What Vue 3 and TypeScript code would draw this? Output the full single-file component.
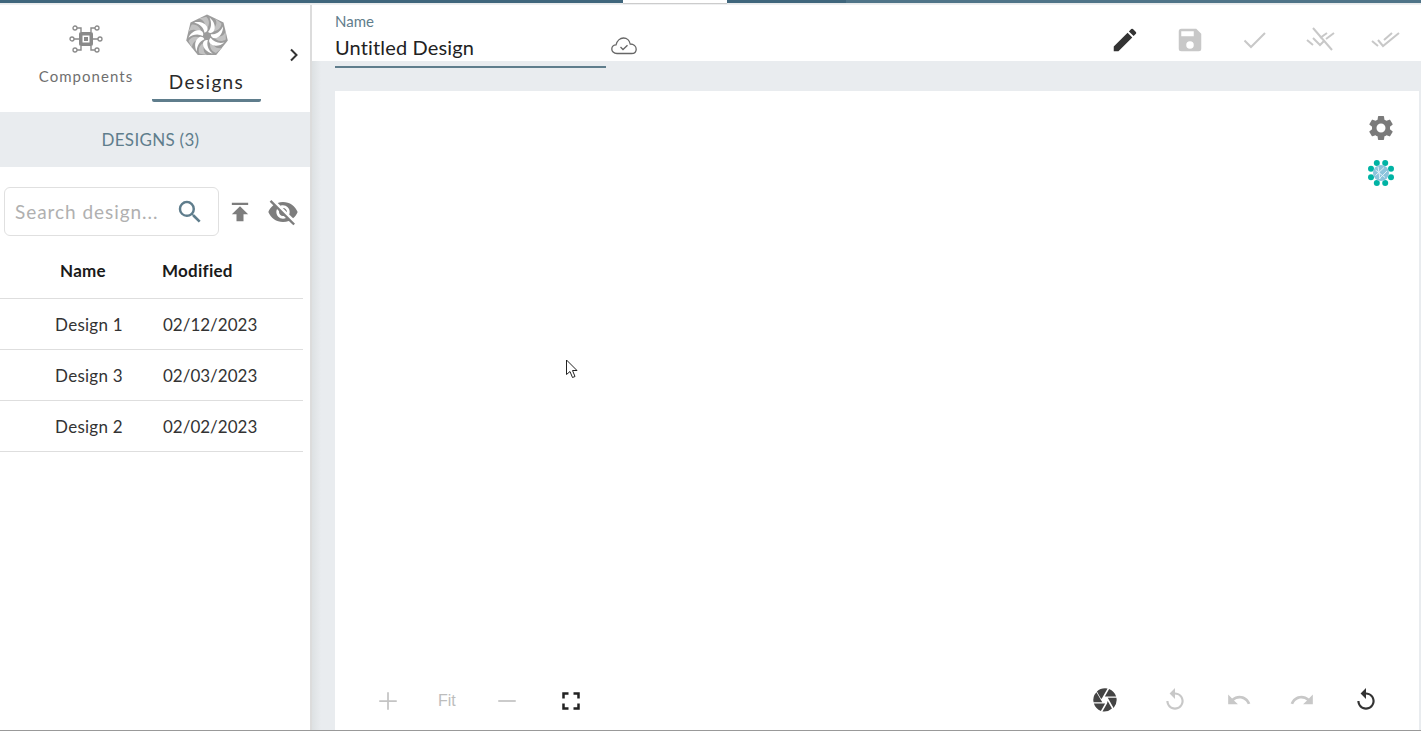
<script setup lang="ts">
const designs = [
  { name: 'Design 1', modified: '02/12/2023' },
  { name: 'Design 3', modified: '02/03/2023' },
  { name: 'Design 2', modified: '02/02/2023' },
]

// swirl blades of the designs logo
const blades = [0, 51.4, 102.9, 154.3, 205.7, 257.1, 308.6]
</script>

<template>
  <div class="page">
    <div class="top-stripe">
      <span class="stripe stripe--a"></span>
      <span class="stripe stripe--gap"></span>
      <span class="stripe stripe--b"></span>
      <span class="stripe stripe--c"></span>
    </div>

    <div class="body">
      <aside class="sidebar">
        <nav class="tabs">
          <div class="tab tab--components">
            <svg class="tab__chip" width="36" height="30" viewBox="0 0 36 30" fill="none" stroke="#8a8a8a">
              <rect x="11" y="8" width="14" height="14" rx="2" fill="#8a8a8a" stroke="none" />
              <rect x="14.5" y="11.5" width="7" height="7" fill="#fff" stroke="none" />
              <rect x="16" y="13" width="4" height="4" fill="#8a8a8a" stroke="none" />
              <path d="M13 8 V4 H9 M23 8 V4 H27 M13 22 V26 H9 M23 22 V26 H27 M11 15 H6 M25 15 H30" stroke-width="1.4" />
              <circle cx="7" cy="4" r="2" stroke-width="1.3" />
              <circle cx="29" cy="4" r="2" stroke-width="1.3" />
              <circle cx="7" cy="26" r="2" stroke-width="1.3" />
              <circle cx="29" cy="26" r="2" stroke-width="1.3" />
              <circle cx="4" cy="15" r="2" stroke-width="1.3" />
              <circle cx="32" cy="15" r="2" stroke-width="1.3" />
            </svg>
            <span class="tab__label">Components</span>
          </div>
          <div class="tab tab--active">
            <svg class="tab__logo" width="42" height="44" viewBox="-21 -22 42 44">
              <polygon points="0,-21.5 16.5,-13.5 20.8,4.5 9.2,19 -9.2,19 -20.8,4.5 -16.5,-13.5" fill="#9c9c9c" />
              <path
                v-for="a in blades"
                :key="`s${a}`"
                :transform="`rotate(${a})`"
                d="M3 -5 C9 -8 11 -13 8 -17.5 L14.5 -12.5 C14 -7 9 -3.5 3 -5 Z"
                fill="#c2c2c2"
              />
              <path
                v-for="a in blades"
                :key="a"
                :transform="`rotate(${a})`"
                d="M1 -4 C4.5 -8 5 -13 2.5 -18.5 C7 -15 9.5 -9 6.5 -4.5 C5 -2.8 3 -2.6 1 -4 Z"
                fill="#fff"
              />
            </svg>
            <span class="tab__label">Designs</span>
          </div>
          <svg class="tabs__next" width="10" height="14" viewBox="0 0 10 14" fill="none" stroke="#333" stroke-width="2">
            <path d="M2 1.5 L7.5 7 L2 12.5" />
          </svg>
        </nav>

        <div class="section-title">DESIGNS (3)</div>

        <div class="tools">
          <label class="search">
            <span class="search__text">Search design...</span>
            <svg width="30" height="30" viewBox="0 0 24 24" fill="#5f7d8c">
              <path d="M15.5 14h-.79l-.28-.27A6.47 6.47 0 0 0 16 9.5 6.5 6.5 0 1 0 9.5 16c1.61 0 3.09-.59 4.23-1.57l.27.28v.79l5 4.99L20.49 19l-4.99-5zm-6 0C7.01 14 5 11.99 5 9.5S7.01 5 9.5 5 14 7.01 14 9.5 11.99 14 9.5 14z" />
            </svg>
          </label>
          <svg class="tools__icon" width="28" height="28" viewBox="0 0 24 24" fill="#7d7d7d">
            <path d="M5 4v2h14V4H5zm0 10h4v6h6v-6h4l-7-7-7 7z" />
          </svg>
          <svg class="tools__icon tools__icon--eye" width="32" height="32" viewBox="0 0 24 24" fill="#7d7d7d">
            <path d="M12 7c2.76 0 5 2.24 5 5 0 .65-.13 1.26-.36 1.83l2.92 2.92c1.51-1.26 2.7-2.89 3.43-4.75-1.73-4.39-6-7.5-11-7.5-1.4 0-2.74.25-3.98.7l2.16 2.16C10.74 7.13 11.35 7 12 7zM2 4.27l2.28 2.28.46.46C3.08 8.3 1.78 10.02 1 12c1.73 4.39 6 7.5 11 7.5 1.55 0 3.03-.3 4.38-.84l.42.42L19.73 22 21 20.73 3.27 3 2 4.27zM7.53 9.8l1.55 1.55c-.05.21-.08.43-.08.65 0 1.66 1.34 3 3 3 .22 0 .44-.03.65-.08l1.55 1.55c-.67.33-1.41.53-2.2.53-2.76 0-5-2.24-5-5 0-.79.2-1.53.53-2.2zm4.31-.78l3.15 3.15.02-.16c0-1.66-1.34-3-3-3l-.17.01z" />
          </svg>
        </div>

        <div class="table">
          <div class="row row--head">
            <span class="cell cell--name">Name</span>
            <span class="cell cell--date">Modified</span>
          </div>
          <div v-for="d in designs" :key="d.name" class="row">
            <span class="cell cell--name">{{ d.name }}</span>
            <span class="cell cell--date">{{ d.modified }}</span>
          </div>
        </div>
      </aside>

      <main class="main">
        <header class="toolbar">
          <div class="name-field">
            <span class="name-field__label">Name</span>
            <span class="name-field__value">Untitled Design</span>
          </div>
          <svg class="cloud" width="28" height="22" viewBox="0 0 28 22" fill="none" stroke="#666" stroke-width="1.3">
            <path d="M7 18.5 C3.5 18.5 1.8 16.2 1.8 14 C1.8 11.5 3.8 9.8 6 9.8 C7 6 10 3 13.5 3 C17 3 19.6 5.8 20.2 9 C23.6 9 26.2 11.2 26.2 14.2 C26.2 16.6 24.4 18.5 21.5 18.5 Z" />
            <path d="M10.5 12 L13 14.5 L17.5 10.2" />
          </svg>
          <div class="actions">
            <svg width="30" height="30" viewBox="0 0 24 24" fill="#333">
              <path d="M3 17.25V21h3.75L17.81 9.94l-3.75-3.75L3 17.25zM20.71 7.04a1 1 0 0 0 0-1.41l-2.34-2.34a1 1 0 0 0-1.41 0l-1.83 1.83 3.75 3.75 1.83-1.83z" />
            </svg>
            <svg width="30" height="30" viewBox="0 0 24 24" fill="#c8c8c8">
              <path d="M17 3H5a2 2 0 0 0-2 2v14a2 2 0 0 0 2 2h14a2 2 0 0 0 2-2V7l-4-4zm-5 16a3 3 0 1 1 0-6 3 3 0 0 1 0 6zm3-10H5V5h10v4z" />
            </svg>
            <svg width="30" height="30" viewBox="0 0 30 30" fill="none" stroke="#c8c8c8" stroke-width="2">
              <path d="M4.5 15.5 L11 22 L25 8" />
            </svg>
            <svg width="30" height="30" viewBox="0 0 30 30" fill="none" stroke="#c8c8c8" stroke-width="2">
              <path d="M2 15 L8 20 M8 13 L15 20 L19 16 M15 13 L22 8 M21 14 L29 8 M8 3 L27 25" />
            </svg>
            <svg width="30" height="30" viewBox="0 0 30 30" fill="none" stroke="#c8c8c8" stroke-width="2">
              <path d="M2 16 L8 21 M8 15 L13 21 L29 8 M14 15 L22 8" />
            </svg>
          </div>
        </header>

        <section class="canvas-wrap">
          <div class="canvas">
            <div class="side-tools">
              <svg width="30" height="30" viewBox="0 0 24 24" fill="#7a7a7a">
                <path d="M19.14 12.94c.04-.3.06-.61.06-.94 0-.32-.02-.64-.07-.94l2.03-1.58a.49.49 0 0 0 .12-.61l-1.92-3.32a.49.49 0 0 0-.59-.22l-2.39.96c-.5-.38-1.03-.7-1.62-.94l-.36-2.54a.48.48 0 0 0-.48-.41h-3.84a.48.48 0 0 0-.47.41l-.36 2.54c-.59.24-1.13.57-1.62.94l-2.39-.96a.49.49 0 0 0-.59.22L2.74 8.87a.48.48 0 0 0 .12.61l2.03 1.58c-.05.3-.09.63-.09.94s.02.64.07.94l-2.03 1.58a.49.49 0 0 0-.12.61l1.92 3.32c.12.22.37.29.59.22l2.39-.96c.5.38 1.03.7 1.62.94l.36 2.54c.05.24.24.41.48.41h3.84c.24 0 .44-.17.47-.41l.36-2.54c.59-.24 1.13-.56 1.62-.94l2.39.96c.22.08.47 0 .59-.22l1.92-3.32a.48.48 0 0 0-.12-.61l-2.01-1.58zM12 15.6a3.6 3.6 0 1 1 0-7.2 3.6 3.6 0 0 1 0 7.2z" />
              </svg>
              <svg width="28" height="28" viewBox="0 0 28 28">
                <g fill="#00b3a4">
                  <circle cx="9.8" cy="4" r="3" /><circle cx="18.2" cy="4" r="3" />
                  <circle cx="9.8" cy="24" r="3" /><circle cx="18.2" cy="24" r="3" />
                  <circle cx="4" cy="9.8" r="3" /><circle cx="4" cy="18.2" r="3" />
                  <circle cx="24" cy="9.8" r="3" /><circle cx="24" cy="18.2" r="3" />
                </g>
                <circle cx="14" cy="14" r="8" fill="#8cc4dc" />
                <path d="M8.5 11 L18 18.5 M8.5 16.5 L17 8.5 M12 20 L20 12 M11 7.5 L13 20" stroke="#e6f4fa" stroke-width="0.9" />
              </svg>
            </div>

            <svg class="cursor" width="15" height="21" viewBox="0 0 15 21" fill="#fff" stroke="#222" stroke-width="1">
              <path d="M1.5 1 V15.5 L5 12.5 L7.5 18.5 L10 17.5 L7.5 11.5 H12 Z" />
            </svg>

            <div class="zoom-tools">
              <svg width="30" height="30" viewBox="0 0 24 24" fill="#c4c4c4">
                <path d="M19 12.7h-6.3V19h-1.4v-6.3H5v-1.4h6.3V5h1.4v6.3H19z" />
              </svg>
              <span class="zoom-tools__fit">Fit</span>
              <svg class="zoom-tools__minus" width="30" height="30" viewBox="0 0 24 24" fill="#c4c4c4">
                <path d="M19 12.7H5v-1.4h14z" />
              </svg>
              <svg width="30" height="30" viewBox="0 0 24 24" fill="#222">
                <path d="M7 14H5v5h5v-2H7v-3zm-2-4h2V7h3V5H5v5zm12 7h-3v2h5v-5h-2v3zM14 5v2h3v3h2V5h-5z" />
              </svg>
            </div>

            <div class="history-tools">
              <svg class="history-tools__camera" width="28" height="28" viewBox="0 0 24 24" fill="#444">
                <path d="M9.4 10.5l4.77-8.26A9.9 9.9 0 0 0 12 2a10 10 0 0 0-6.96 2.82l3.66 6.35.7-.67zM21.54 9c-.92-2.92-3.15-5.26-6-6.34L11.88 9h9.66zm.26 1h-7.49l.29.5 4.76 8.25A9.95 9.95 0 0 0 22 12c0-.69-.07-1.35-.2-2zM8.54 12l-3.9-6.75A9.92 9.92 0 0 0 2.2 14h7.49l-1.15-2zm-6.08 3c.92 2.92 3.15 5.26 6 6.34L12.12 15H2.46zm11.27 0l-3.9 6.76a9.9 9.9 0 0 0 8.13-2.58L14.3 12.83 13.73 15z" />
              </svg>
              <svg width="26" height="26" viewBox="0 0 24 24" fill="#c8c8c8">
                <path d="M12 5V1L7 6l5 5V7c3.31 0 6 2.69 6 6s-2.69 6-6 6-6-2.69-6-6H4c0 4.42 3.58 8 8 8s8-3.58 8-8-3.58-8-8-8z" />
              </svg>
              <svg width="26" height="26" viewBox="0 0 24 24" fill="#c8c8c8">
                <path d="M12.5 8c-2.65 0-5.05.99-6.9 2.6L2 7v9h9l-3.62-3.62c1.39-1.16 3.16-1.88 5.12-1.88 3.54 0 6.55 2.31 7.6 5.5l2.37-.78C21.08 11.03 17.15 8 12.5 8z" />
              </svg>
              <svg width="26" height="26" viewBox="0 0 24 24" fill="#c8c8c8">
                <path d="M18.4 10.6C16.55 8.99 14.15 8 11.5 8c-4.65 0-8.58 3.03-9.96 7.22L3.9 16c1.05-3.19 4.05-5.5 7.6-5.5 1.95 0 3.73.72 5.12 1.88L13 16h9V7l-3.6 3.6z" />
              </svg>
              <svg width="26" height="26" viewBox="0 0 24 24" fill="#333">
                <path d="M12 5V1L7 6l5 5V7c3.31 0 6 2.69 6 6s-2.69 6-6 6-6-2.69-6-6H4c0 4.42 3.58 8 8 8s8-3.58 8-8-3.58-8-8-8z" />
              </svg>
            </div>
          </div>
        </section>
      </main>
    </div>
  </div>
</template>

<style>
html,
body {
  margin: 0;
  overflow: hidden;
}
</style>

<style scoped>
.page {
  width: 1421px;
  height: 731px;
  display: flex;
  flex-direction: column;
  box-sizing: border-box;
  border-bottom: 1px solid #999;
  font-family: 'Lato', 'Liberation Sans', sans-serif;
  color: #2b2b2b;
  background: #fff;
  overflow: hidden;
}

.top-stripe {
  height: 5px;
  flex-shrink: 0;
  display: flex;
  background: linear-gradient(#cfd4d6, #f2f3f4);
}

.stripe {
  height: 3px;
}

.stripe--a {
  width: 623px;
  background: #3f667c;
}

.stripe--gap {
  width: 104px;
  height: 4px;
  background: #fff;
  border-bottom: 1px solid #ccc;
  box-sizing: border-box;
}

.stripe--b {
  width: 119px;
  background: #3f667c;
}

.stripe--c {
  flex: 1;
  background: #4f7488;
}

.body {
  flex: 1;
  display: flex;
  min-height: 0;
}

.sidebar {
  width: 310px;
  flex-shrink: 0;
  background: #fff;
  display: flex;
  flex-direction: column;
}

.tabs {
  height: 107px;
  flex-shrink: 0;
  display: flex;
  padding-left: 25px;
  position: relative;
}

.tab {
  display: flex;
  flex-direction: column;
  align-items: center;
}

.tab--components {
  width: 122px;
  padding-top: 19px;
  color: #6f6f6f;
}

.tab__chip {
  display: block;
}

.tab--components .tab__label {
  margin-top: 13px;
  font-size: 15px;
  letter-spacing: 1.05px;
}

.tab--active {
  width: 109px;
  margin-left: 5px;
  height: 97px;
  border-bottom: 3px solid #5f7d8c;
  border-radius: 0 0 2px 2px;
  padding-top: 9px;
  box-sizing: border-box;
  color: #2b2b2b;
}

.tab__logo {
  display: block;
}

.tab--active .tab__label {
  margin-top: 12px;
  font-size: 19px;
  letter-spacing: 1.35px;
}

.tabs__next {
  position: absolute;
  left: 289px;
  top: 43px;
}

.section-title {
  height: 55px;
  flex-shrink: 0;
  background: #e9ecef;
  display: flex;
  align-items: center;
  justify-content: center;
  padding-right: 9px;
  font-size: 17px;
  letter-spacing: 0.3px;
  color: #5f7d8c;
}

.tools {
  display: flex;
  align-items: center;
  padding: 20px 0 0 4px;
}

.search {
  width: 215px;
  height: 49px;
  box-sizing: border-box;
  border: 1px solid #e0e0e0;
  border-radius: 6px;
  padding: 0 13px 0 10px;
  display: flex;
  align-items: center;
  justify-content: space-between;
}

.search__text {
  font-size: 19px;
  letter-spacing: 0.95px;
  white-space: nowrap;
  color: #b0b0b0;
}

.tools__icon {
  margin-left: 7px;
}

.tools__icon--eye {
  margin-left: 13px;
}

.table {
  margin-top: 11px;
  width: 303px;
}

.row {
  height: 51px;
  box-sizing: border-box;
  border-bottom: 1px solid #dedede;
  display: flex;
  align-items: center;
  font-size: 17px;
  color: #333;
}

.row--head {
  font-size: 17px;
  font-weight: 700;
  color: #1a1a1a;
  height: 52px;
  padding-bottom: 4px;
}

.cell--name {
  width: 163px;
  text-align: center;
  padding-left: 15px;
  box-sizing: border-box;
  letter-spacing: 0.25px;
}

.row--head .cell--name {
  padding-left: 3px;
}

.row--head .cell--date {
  margin-left: -1px;
  letter-spacing: 0.25px;
}

.main {
  flex: 1;
  display: flex;
  flex-direction: column;
  min-width: 0;
  border-left: 2px solid #dcdcdc;
}

.toolbar {
  height: 56px;
  flex-shrink: 0;
  background: #fff;
  display: flex;
  padding-left: 23px;
  position: relative;
}

.name-field {
  width: 271px;
  height: 63px;
  box-sizing: border-box;
  border-bottom: 2px solid #5f7d8c;
  position: relative;
  z-index: 1;
  display: flex;
  flex-direction: column;
  padding-top: 8px;
}

.name-field__label {
  font-size: 15px;
  color: #5f7d8c;
  line-height: 17px;
}

.name-field__value {
  font-size: 20px;
  letter-spacing: 0.15px;
  line-height: 26px;
  margin-top: 4px;
  color: #222;
}

.cloud {
  margin: 30px 0 0 4px;
}

.actions {
  margin-left: auto;
  display: flex;
  gap: 35px;
  padding: 20px 21px 0 0;
}

.canvas-wrap {
  flex: 1;
  min-height: 0;
  background: linear-gradient(to right, #dde1e3, #e9ecef 9px);
  padding: 30px 2px 0 23px;
  display: flex;
}

.canvas {
  flex: 1;
  background: #fff;
  position: relative;
}

.side-tools {
  position: absolute;
  right: 23px;
  top: 22px;
  display: flex;
  flex-direction: column;
  align-items: center;
  gap: 16px;
}

.cursor {
  position: absolute;
  left: 230px;
  top: 268px;
}

.zoom-tools {
  position: absolute;
  left: 38px;
  bottom: 14px;
  display: flex;
  align-items: center;
  gap: 35px;
}

.zoom-tools__minus {
  margin-left: 1px;
  margin-right: -1px;
}

.zoom-tools__fit {
  font-size: 16px;
  color: #bdbdbd;
  font-family: 'Liberation Sans', sans-serif;
}

.history-tools {
  position: absolute;
  right: 40px;
  bottom: 16px;
  display: flex;
  align-items: center;
  gap: 37.7px;
}

.history-tools__camera {
  margin-right: 5px;
}
</style>
